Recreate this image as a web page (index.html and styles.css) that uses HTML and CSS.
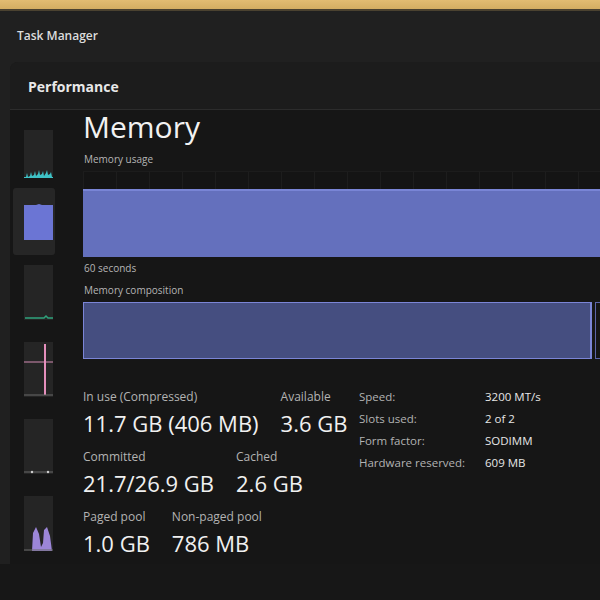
FILE: index.html
```html
<!DOCTYPE html>
<html lang="en">
<head>
    <meta charset="UTF-8">
    <meta name="viewport" content="width=device-width, initial-scale=1.0">
    <title>Task Manager</title>
    <link rel="stylesheet" href="styles.css">
</head>
<body>
    <div class="desk-edge"></div>
    <div class="titlebar">Task Manager</div>

    <div class="frame">
        <div class="window">
            <div class="page-head">Performance</div>

            <div class="page-body">
                <!-- left list of small graphs -->
                <div class="sidebar">
                    <div class="thumb-slot small">
                        <div class="thumb">
                            <svg width="29" height="48" viewBox="0 0 29 48">
                                <path d="M0 47 L2 47 L3 43 L4 47 L6 46 L7 42 L8 46 L10 45 L11 41 L12 46 L14 44 L15 40 L16 45 L18 44 L19 41 L20 46 L22 43 L23 40 L24 45 L26 44 L27 42 L28 47 L29 47 L29 48 L0 48 Z" fill="#3ec3c7"/>
                            </svg>
                        </div>
                    </div>
                    <div class="thumb-slot active">
                        <div class="thumb">
                            <svg width="29" height="36" viewBox="0 0 29 36">
                                <path d="M0 1 L12 1 L15 0 L18 1 L29 1 L29 36 L0 36 Z" fill="#6b75d4"/>
                            </svg>
                        </div>
                    </div>
                    <div class="thumb-slot">
                        <div class="thumb">
                            <svg width="29" height="55" viewBox="0 0 29 55">
                                <path d="M1 53 L20 53 L22 51 L24 53 L29 53" stroke="#2fa27c" stroke-width="1.5" fill="none"/>
                            </svg>
                        </div>
                    </div>
                    <div class="thumb-slot">
                        <div class="thumb">
                            <svg width="29" height="55" viewBox="0 0 29 55">
                                <line x1="0" y1="20" x2="29" y2="20" stroke="#9a6a84" stroke-width="1.5"/>
                                <line x1="21" y1="2" x2="21" y2="53" stroke="#e58fbc" stroke-width="2"/>
                                <line x1="0" y1="53" x2="29" y2="53" stroke="#6a6a6a" stroke-width="1"/>
                            </svg>
                        </div>
                    </div>
                    <div class="thumb-slot">
                        <div class="thumb">
                            <svg width="29" height="55" viewBox="0 0 29 55">
                                <line x1="0" y1="53" x2="29" y2="53" stroke="#6a6a6a" stroke-width="1"/>
                                <circle cx="8" cy="53" r="1.2" fill="#cfcfcf"/>
                                <circle cx="24" cy="53" r="1.2" fill="#cfcfcf"/>
                            </svg>
                        </div>
                    </div>
                    <div class="thumb-slot">
                        <div class="thumb">
                            <svg width="29" height="55" viewBox="0 0 29 55">
                                <path d="M8 55 L9 37 L12 31 L15 38 L17 51 L19 47 L20 34 L23 31 L26 40 L28 55 Z" fill="#9c86d8"/>
                                <line x1="0" y1="54" x2="29" y2="54" stroke="#6a6a6a" stroke-width="1"/>
                            </svg>
                        </div>
                    </div>
                </div>

                <div class="main">
                    <h1 class="page-title">Memory</h1>

                    <div class="caption caption-first">Memory usage</div>
                    <div class="usage-graph">
                        <div class="usage-fill" style="height: 79%;"></div>
                    </div>
                    <div class="caption">60 seconds</div>

                    <div class="caption caption-top">Memory composition</div>
                    <div class="composition">
                        <div class="comp-used"></div>
                        <div class="comp-rest"></div>
                    </div>

                    <div class="details">
                        <div class="stats">
                            <div class="stat-row">
                                <div class="stat">
                                    <div class="stat-label">In use (Compressed)</div>
                                    <div class="stat-value">11.7 GB (406 MB)</div>
                                </div>
                                <div class="stat">
                                    <div class="stat-label">Available</div>
                                    <div class="stat-value">3.6 GB</div>
                                </div>
                            </div>
                            <div class="stat-row">
                                <div class="stat">
                                    <div class="stat-label">Committed</div>
                                    <div class="stat-value">21.7/26.9 GB</div>
                                </div>
                                <div class="stat">
                                    <div class="stat-label">Cached</div>
                                    <div class="stat-value">2.6 GB</div>
                                </div>
                            </div>
                            <div class="stat-row">
                                <div class="stat">
                                    <div class="stat-label">Paged pool</div>
                                    <div class="stat-value">1.0 GB</div>
                                </div>
                                <div class="stat">
                                    <div class="stat-label">Non-paged pool</div>
                                    <div class="stat-value">786 MB</div>
                                </div>
                            </div>
                        </div>

                        <div class="specs">
                            <span class="spec-key">Speed:</span><span class="spec-val">3200 MT/s</span>
                            <span class="spec-key">Slots used:</span><span class="spec-val">2 of 2</span>
                            <span class="spec-key">Form factor:</span><span class="spec-val">SODIMM</span>
                            <span class="spec-key">Hardware reserved:</span><span class="spec-val">609 MB</span>
                        </div>
                    </div>
                </div>
            </div>
        </div>
    </div>
</body>
</html>
```

FILE: styles.css
```css
body {
    font-family: "Open Sans", "Noto Sans", sans-serif;
    background-color: #171717;
    color: #f0f0f0;
    margin: 0;
    overflow: hidden;
}

.desk-edge {
    height: 9px;
    background: linear-gradient(#e2bc72, #d4ad62);
    border-bottom: 2px solid #4b4230;
}

.titlebar {
    height: 51px;
    background-color: #202020;
    color: #dcdcdc;
    font-size: 12px;
    font-weight: 600;
    padding-left: 17px;
    line-height: 49px;
}

.frame {
    background-color: #202020;
    padding-left: 10px;
    height: 502px;
}

.window {
    background-color: #1a1a1a;
    border-top-left-radius: 8px;
    height: 100%;
    display: flex;
    flex-direction: column;
}

.page-head {
    height: 47px;
    line-height: 49px;
    padding-left: 18px;
    font-size: 14px;
    font-weight: 700;
    color: #e8e8e8;
    border-bottom: 1px solid #2c2c2c;
    background-color: #1c1c1c;
    border-top-left-radius: 8px;
}

.page-body {
    flex: 1;
    display: flex;
    background-color: #161616;
}

.sidebar {
    width: 58px;
    padding-top: 20px;
    display: flex;
    flex-direction: column;
    gap: 22px;
}

.thumb-slot {
    box-sizing: border-box;
    width: 42px;
    margin-left: 3px;
    padding-left: 11px;
    height: 55px;
    display: flex;
    align-items: center;
}

.thumb-slot.small {
    height: 48px;
}

.thumb-slot.active {
    background-color: #262626;
    height: 67px;
    margin-top: -12px;
    margin-bottom: -12px;
    border-radius: 3px;
}

.thumb {
    width: 29px;
    background-color: #252525;
    display: flex;
}

.thumb-slot.active .thumb {
    background-color: transparent;
}

.main {
    flex: 1;
    padding-left: 15px;
    min-width: 0;
}

.page-title {
    margin: 0;
    font-size: 30px;
    font-weight: 400;
    line-height: 36px;
    margin-top: -1px;
    color: #f2f2f2;
}

.caption {
    font-size: 10px;
    color: #b5b5b5;
    line-height: 14px;
    margin: 4px 0 5px 1px;
}

.caption-first {
    margin-top: 7px;
}

.caption-top {
    margin-top: 8px;
}

.usage-graph {
    height: 86px;
    display: flex;
    align-items: flex-end;
    background-image:
        linear-gradient(#1c1c1c 1px, transparent 1px),
        repeating-linear-gradient(90deg, #1d1d1d 0 1px, transparent 1px 33px);
    background-color: #141414;
}

.usage-fill {
    width: 100%;
    background-color: #6470bd;
    border-top: 2px solid #7985d6;
    box-sizing: border-box;
}

.composition {
    display: flex;
    height: 57px;
    gap: 3px;
}

.comp-used {
    width: 506px;
    background-color: #454e80;
    border: 1px solid #7b85d6;
    border-right-width: 2px;
}

.comp-rest {
    flex: 1;
    border: 1px solid #5c64a8;
    border-right: none;
    background-color: #151515;
}

.details {
    display: flex;
    margin-top: 30px;
}

.stats {
    width: 276px;
    display: flex;
    flex-direction: column;
    gap: 13px;
}

.stat-row {
    display: flex;
    gap: 22px;
}

.stat-label {
    font-size: 12px;
    color: #b3b3b3;
    line-height: 15px;
}

.stat-value {
    font-size: 22px;
    line-height: 26px;
    margin-top: 6px;
    color: #f0f0f0;
}

.specs {
    display: grid;
    grid-template-columns: 126px auto;
    grid-auto-rows: 15px;
    row-gap: 7px;
    font-size: 11.5px;
    color: #b3b3b3;
    align-content: start;
}

.spec-val {
    color: #e6e6e6;
}
```
